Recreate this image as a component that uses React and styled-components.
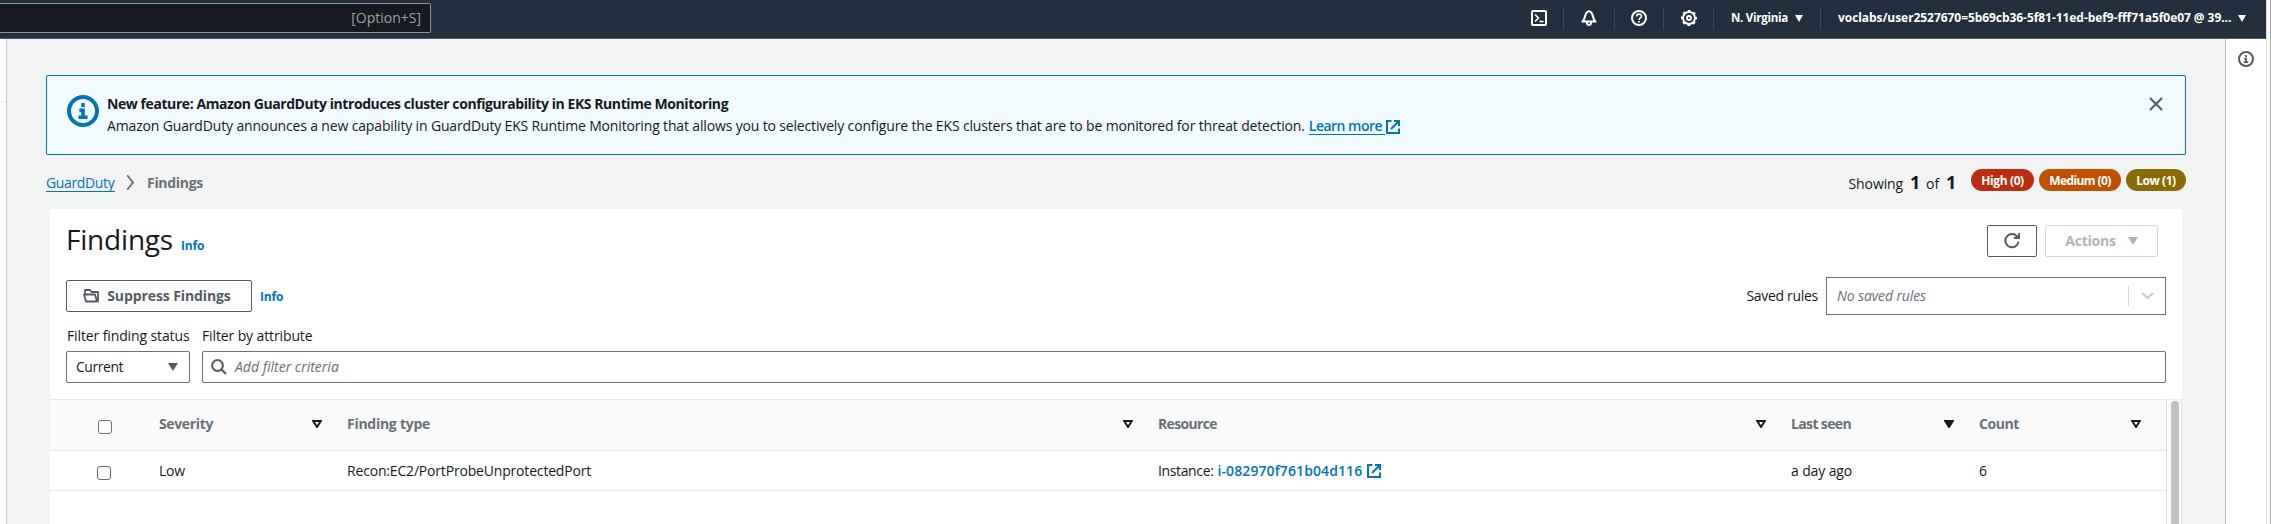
import React from "react";
import styled, { createGlobalStyle } from "styled-components";

const GlobalStyle = createGlobalStyle`
  * { box-sizing: border-box; }
  body { margin: 0; overflow: hidden; background: #fff; }
  #root { font: 400 14px/20px "Open Sans", "Noto Sans", sans-serif; color: #16191f; }
`;

const Page = styled.div`
  display: flex;
  width: 2271px;
  height: 524px;
  overflow: hidden;
  white-space: nowrap;
`;
const Shell = styled.div`
  flex: 1;
  min-width: 0;
  display: flex;
  flex-direction: column;
`;
const WindowEdge = styled.div`
  flex: none;
  width: 5px;
  background: #fafafa;
  border-left: 1px solid #d9d9d9;
  border-right: 1px solid #ababab;
`;

/* top navigation */
const TopNav = styled.header`
  display: flex;
  flex: none;
  height: 39px;
  background: #232f3e;
  border-bottom: 1px solid #545b64;
`;
const SearchBox = styled.div`
  width: 431px;
  height: 30px;
  margin-top: 3px;
  padding-right: 9px;
  display: flex;
  align-items: center;
  justify-content: flex-end;
  color: #95a5a6;
  background: #16191f;
  border: 1px solid #879596;
  border-left: 0;
  border-radius: 0 2px 2px 0;
`;
const NavItems = styled.nav`
  display: flex;
  align-items: center;
  height: 36px;
  margin-left: auto;
  color: #fff;
`;
const NavIcon = styled.div`
  display: flex;
  align-items: center;
  justify-content: center;
  width: ${(p) => p.$w}px;
  height: 23px;
  border-right: 1px solid #414750;
`;
const NavMenu = styled.div`
  display: flex;
  align-items: center;
  width: ${(p) => p.$w}px;
  height: 23px;
  padding-left: 17px;
  border-right: ${(p) => (p.$last ? "0" : "1px solid #414750")};
  font-size: ${(p) => p.$size}px;
  font-weight: 700;
  letter-spacing: ${(p) => p.$track}px;
  svg { margin-left: 7px; }
`;

/* frame */
const Body = styled.div`
  display: flex;
  flex: 1;
`;
const LeftPanel = styled.aside`
  width: 7px;
  background: #fff;
  border-right: 1px solid #c2c8cb;
`;
const PanelRule = styled.div`
  height: 63px;
  border-bottom: 1px solid #eaeded;
`;
const RightPanel = styled.aside`
  display: flex;
  justify-content: center;
  width: 41px;
  padding-top: 12px;
  background: #fff;
  border-left: 1px solid #bcc1c5;
  color: #545b64;
`;
const Main = styled.main`
  flex: 1;
  min-width: 0;
  display: flex;
  flex-direction: column;
  padding: 36px 39px 0 39px;
  background: #f2f3f3;
`;

/* banner */
const Banner = styled.section`
  display: flex;
  flex: none;
  height: 80px;
  padding: 19px 21px 0 20px;
  background: #f1faff;
  border: 1px solid #0073bb;
  border-radius: 2px;
  color: #0073bb;
`;
const BannerText = styled.div`
  flex: 1;
  margin: -2px 0 0 8px;
  color: #16191f;
`;
const BannerTitle = styled.div`
  font-weight: 700;
  line-height: 22px;
  letter-spacing: -0.423px;
`;
const BannerCopy = styled.div`
  display: flex;
  line-height: 22px;
  letter-spacing: -0.155px;
`;
const CloseButton = styled.div`
  padding: 1px 0;
  color: #545b64;
`;
const BannerLink = styled.a`
  display: flex;
  margin-left: 4px;
  color: #0073bb;
  font-weight: 600;
  letter-spacing: -0.52px;
  span { border-bottom: 1px solid #0073bb; height: 20px; padding-right: 3px; line-height: 22px; }
  svg { margin: 5px 0 0 1px; }
`;

/* breadcrumb row */
const CrumbRow = styled.div`
  display: flex;
  flex: none;
  align-items: center;
  height: 54px;
`;
const CrumbLink = styled.a`
  color: #0073bb;
  width: 69px;
  height: 18px;
  line-height: 18px;
  margin: 2px 11px 0 0;
  font-weight: 500;
  letter-spacing: -0.36px;
  border-bottom: 1px solid #0073bb;
`;
const CrumbCurrent = styled.span`
  margin: 1px 0 0 13px;
  color: #687078;
  font-weight: 700;
  letter-spacing: -0.3px;
`;
const Showing = styled.div`
  display: flex;
  align-items: baseline;
  gap: 7px;
  margin: 2px 16px 0 auto;
  letter-spacing: -0.1px;
  b { font-size: 18px; width: 9px; }
`;
const Pill = styled.span`
  display: flex;
  align-items: center;
  justify-content: center;
  width: ${(p) => p.$w}px;
  height: 22px;
  margin: -4px 0 0 ${(p) => p.$gap || 0}px;
  padding-top: 1px;
  border-radius: 11px;
  background: ${(p) => p.$bg};
  color: #fff;
  font-size: 12px;
  font-weight: 700;
  letter-spacing: ${(p) => p.$track}px;
`;

/* findings card */
const Card = styled.section`
  flex: 1;
  margin: 0 4px 0 4px;
  background: #fff;
`;
const Controls = styled.div`
  padding: 16px;
`;
const TitleRow = styled.div`
  display: flex;
  height: 32px;
  align-items: center;
  padding-right: 8px;
`;
const Title = styled.h1`
  width: 107px;
  margin: -4px 8px 0 0;
  font-size: 28px;
  font-weight: 400;
  line-height: 32px;
  letter-spacing: -0.2px;
`;
const InfoLink = styled.a`
  color: #0073bb;
  font-size: 12px;
  font-weight: 700;
  letter-spacing: -0.2px;
  margin-top: ${(p) => p.$drop}px;
`;
const Button = styled.div`
  display: flex;
  align-items: center;
  justify-content: center;
  width: ${(p) => p.$w}px;
  height: 32px;
  padding-right: ${(p) => p.$nudge || 0}px;
  border: 1px solid ${(p) => (p.$disabled ? "#d5dbdb" : "#545b64")};
  border-radius: 2px;
  color: ${(p) => (p.$disabled ? "#aab7b8" : "#545b64")};
  font-weight: 700;
  letter-spacing: ${(p) => p.$track || 0}px;
`;
const ButtonGroup = styled.div`
  display: flex;
  gap: 8px;
  margin-left: auto;
  ${Button} > span + svg { margin-left: 12px; }
`;
const RulesRow = styled.div`
  display: flex;
  align-items: center;
  height: 38px;
  margin-top: 20px;
  ${Button} > svg { margin-right: 8px; }
  ${InfoLink} { margin-left: 8px; }
`;
const RulesLabel = styled.span`
  margin: 0 8px 0 auto;
  letter-spacing: -0.3px;
`;
const Field = styled.div`
  display: flex;
  align-items: center;
  width: ${(p) => (p.$w ? p.$w + "px" : "auto")};
  height: ${(p) => p.$h || 32}px;
  padding: 0 ${(p) => p.$right || 11}px 0 ${(p) => p.$left || 9}px;
  border: 1px solid #687078;
  border-radius: ${(p) => (p.$square ? 0 : 2)}px;
  letter-spacing: -0.45px;
  svg { color: #545b64; }
`;
const Placeholder = styled.span`
  flex: 1;
  margin-left: ${(p) => p.$inset || 0}px;
  color: #687078;
  font-style: italic;
  font-weight: 500;
  letter-spacing: ${(p) => p.$track}px;
`;
const Divider = styled.i`
  width: 1px;
  height: 20px;
  margin-right: 12px;
  background: #d9d9d9;
`;
const Filters = styled.div`
  display: flex;
  gap: 12px;
`;
const FilterGroup = styled.label`
  flex: ${(p) => (p.$grow ? 1 : "none")};
  letter-spacing: -0.12px;
`;
const FilterLabel = styled.div`
  height: 36px;
  padding: 11px 0 0 ${(p) => p.$inset || 0}px;
`;
const FieldValue = styled.span`
  flex: 1;
`;

/* table */
const TableArea = styled.div`
  display: flex;
  height: 125px;
`;
const Table = styled.div`
  flex: none;
  width: 2117px;
  border-top: 1px solid #e5e8e8;
  border-right: 1px solid #dcdfe0;
`;
const Row = styled.div`
  display: grid;
  grid-template-columns: 109px 188px 811px 633px 188px 187px;
  align-items: center;
  height: ${(p) => (p.$head ? 51 : 40)}px;
  padding-bottom: ${(p) => (p.$head ? 3 : 0)}px;
  border-bottom: 1px solid #e5e8e8;
  background: ${(p) => (p.$head ? "#fafafa" : "#fff")};
`;
const HeadCell = styled.div`
  display: flex;
  align-items: center;
  justify-content: space-between;
  padding-right: 25px;
  color: #687078;
  font-weight: 700;
  letter-spacing: ${(p) => p.$track}px;
  svg { color: #16191f; }
`;
const Cell = styled.div`
  display: flex;
  align-items: center;
  padding-top: 1px;
  letter-spacing: ${(p) => p.$track || 0}px;
`;
const CheckCell = styled.div`
  padding: ${(p) => (p.$head ? "6px 0 0 48px" : "5px 0 0 47px")};
`;
const Checkbox = styled.div`
  width: 14px;
  height: 14px;
  border: 1px solid #687078;
  border-radius: 3px;
  background: #fff;
`;
const ResourceLink = styled.a`
  display: flex;
  align-items: center;
  margin-left: 4px;
  color: #0073bb;
  font-weight: 600;
  letter-spacing: 0.1px;
  svg { margin-left: 5px; }
`;
const ScrollTrack = styled.div`
  flex: 1;
  margin-left: 1px;
  padding: 1px 2px 0 3px;
  background: #fafafa;
  border-top: 1px solid #eee;
  border-right: 1px solid #e8e8e8;
`;
const ScrollThumb = styled.div`
  width: 8px;
  height: 140px;
  border-radius: 4px;
  background: #c1c1c1;
`;

const Svg = ({ size = 16, w, h, box = 16, sw = 2, children }) => (
  <svg width={w || size} height={h || size} viewBox={`0 0 ${box} ${box}`} preserveAspectRatio="none"
    fill="none" stroke="currentColor" strokeWidth={sw} style={{ flex: "none" }}>{children}</svg>
);
const Caret = ({ w = 8, h = 7 }) => (
  <svg width={w} height={h} viewBox="0 0 10 8" preserveAspectRatio="none"><path d="M0 0h10L5 8z" fill="currentColor" /></svg>
);
const SortIcon = ({ filled }) => (
  <svg width="10" height="8" viewBox="0 0 10 8">
    <path d="M1.2 1h7.6L5 7z" fill={filled ? "currentColor" : "none"} stroke="currentColor" strokeWidth="2" />
  </svg>
);
const External = ({ size = 14 }) => (
  <Svg size={size} box={14}><path d="M5.5 1H1v12h12V8.500M8 1h5v5M13 1 5 9" /></Svg>
);
const InfoIcon = ({ size }) => (
  <Svg size={size}>
    <circle cx="8" cy="8" r="7" />
    <path d="M8 4v2M6.200 7.700H8V12M5.700 11.100h4.600" strokeWidth="1.800" />
  </Svg>
);

const columns = [
  ["Severity", -0.36], ["Finding type", -0.27], ["Resource", -0.65],
  ["Last seen", -0.64, true], ["Count", -0.42],
];

export default function App() {
  return (
    <Page>
      <GlobalStyle />
      <Shell>
        <TopNav>
          <SearchBox>[Option+S]</SearchBox>
          <NavItems>
            <NavIcon $w={50}>
              <Svg><rect x="1" y="1" width="14" height="14" rx="1" /><path d="M4 4.500 7.500 8 4 11.500" strokeWidth="1.600" /><path d="M8.500 11.500H12.500" strokeWidth="1.600" /></Svg>
            </NavIcon>
            <NavIcon $w={51}>
              <Svg><path d="M1.500 11.500C4.600 10 3.300 1.200 8 1.200s3.400 8.800 6.500 10.300z" strokeLinejoin="round" /><path d="M5.800 12c0 4 4.400 4 4.400 0" strokeWidth="1.800" /></Svg>
            </NavIcon>
            <NavIcon $w={49}>
              <Svg><circle cx="8" cy="8" r="7" /><path d="M5.600 6.500c0-3.200 4.900-3 4.900-.2C10.500 8 8 7.800 8 10" strokeWidth="1.600" /><path d="M8 10.900v1.700" strokeWidth="1.800" /></Svg>
            </NavIcon>
            <NavIcon $w={50}>
              <Svg><circle cx="8" cy="8" r="2" strokeWidth="1.900" /><circle cx="8" cy="8" r="6" strokeWidth="1.900" /><circle cx="8" cy="8" r="7.200" strokeWidth="1.700" strokeDasharray="2.827 2.827" strokeDashoffset="1.400" /></Svg>
            </NavIcon>
            <NavMenu $w={107} $size={11.5} $track={-0.27}>N. Virginia<Caret /></NavMenu>
            <NavMenu $w={445} $size={12} $track={-0.06} $last>
              voclabs/user2527670=5b69cb36-5f81-11ed-bef9-fff71a5f0e07 @ 39...<Caret />
            </NavMenu>
          </NavItems>
        </TopNav>
        <Body>
          <LeftPanel><PanelRule /></LeftPanel>
          <Main>
            <Banner>
              <InfoIcon size={32} />
              <BannerText>
                <BannerTitle>New feature: Amazon GuardDuty introduces cluster configurability in EKS Runtime Monitoring</BannerTitle>
                <BannerCopy>
                  Amazon GuardDuty announces a new capability in GuardDuty EKS Runtime Monitoring that allows you to selectively configure the EKS clusters that are to be monitored for threat detection.
                  <BannerLink><span>Learn more</span><External /></BannerLink>
                </BannerCopy>
              </BannerText>
              <CloseButton><Svg><path d="m2 2 12 12M14 2 2 14" /></Svg></CloseButton>
            </Banner>

            <CrumbRow>
              <CrumbLink>GuardDuty</CrumbLink>
              <Svg w={8} h={15}><path d="M2 0 14 8 2 16" strokeWidth="2.500" stroke="#687078" /></Svg>
              <CrumbCurrent>Findings</CrumbCurrent>
              <Showing>Showing <b>1</b> of <b>1</b></Showing>
              <Pill $w={63} $bg="#ba2e0f" $track={-0.37}>High (0)</Pill>
              <Pill $w={82} $gap={5} $bg="#bf5000" $track={-0.6}>Medium (0)</Pill>
              <Pill $w={60} $gap={5} $bg="#8a6b05" $track={-0.45}>Low (1)</Pill>
            </CrumbRow>

            <Card>
              <Controls>
                <TitleRow>
                  <Title>Findings</Title>
                  <InfoLink $drop={10}>Info</InfoLink>
                  <ButtonGroup>
                    <Button $w={50}>
                      <Svg><path d="M14.500 8.500A6.600 6.600 0 1 1 12.800 3.200L14.500 5" /><path d="M15 0v5h-5" /></Svg>
                    </Button>
                    <Button $w={113} $disabled $track={-0.25}><span>Actions</span><Caret w={10} h={8} /></Button>
                  </ButtonGroup>
                </TitleRow>
                <RulesRow>
                  <Button $w={186} $track={-0.1} $nudge={4}>
                    <Svg><path d="M3 13.500 1 6.500H12L14 13.500zM2 6V2h5l1.500 2H15v9.500H13" strokeWidth="1.800" strokeLinejoin="round" /></Svg>
                    Suppress Findings
                  </Button>
                  <InfoLink $drop={2}>Info</InfoLink>
                  <RulesLabel>Saved rules</RulesLabel>
                  <Field $w={340} $h={38} $square $left={10}>
                    <Placeholder $track={-0.12}>No saved rules</Placeholder>
                    <Divider />
                    <Svg w={13} h={8}><path d="M2 3 8 12 14 3" stroke="#ccc" strokeWidth="3.200" strokeLinecap="round" /></Svg>
                  </Field>
                </RulesRow>
                <Filters>
                  <FilterGroup>
                    <FilterLabel $inset={1}>Filter finding status</FilterLabel>
                    <Field $w={124}><FieldValue>Current</FieldValue><Caret w={10} h={8} /></Field>
                  </FilterGroup>
                  <FilterGroup $grow>
                    <FilterLabel>Filter by attribute</FilterLabel>
                    <Field $left={8}>
                      <Svg><circle cx="6.500" cy="6.500" r="5.400" /><path d="m10.300 10.300 4.700 4.700" /></Svg>
                      <Placeholder $inset={8} $track={0}>Add filter criteria</Placeholder>
                    </Field>
                  </FilterGroup>
                </Filters>
              </Controls>

              <TableArea>
                <Table>
                  <Row $head>
                    <CheckCell $head><Checkbox /></CheckCell>
                    {columns.map(([name, track, filled]) => (
                      <HeadCell key={name} $track={track}>{name}<SortIcon filled={filled} /></HeadCell>
                    ))}
                  </Row>
                  <Row>
                    <CheckCell><Checkbox /></CheckCell>
                    <Cell $track={-0.2}>Low</Cell>
                    <Cell $track={-0.18}>Recon:EC2/PortProbeUnprotectedPort</Cell>
                    <Cell $track={-0.37}>Instance:<ResourceLink>i-082970f761b04d116<External /></ResourceLink></Cell>
                    <Cell $track={-0.13}>a day ago</Cell>
                    <Cell>6</Cell>
                  </Row>
                </Table>
                <ScrollTrack><ScrollThumb /></ScrollTrack>
              </TableArea>
            </Card>
          </Main>
          <RightPanel><InfoIcon size={16} /></RightPanel>
        </Body>
      </Shell>
      <WindowEdge />
    </Page>
  );
}
